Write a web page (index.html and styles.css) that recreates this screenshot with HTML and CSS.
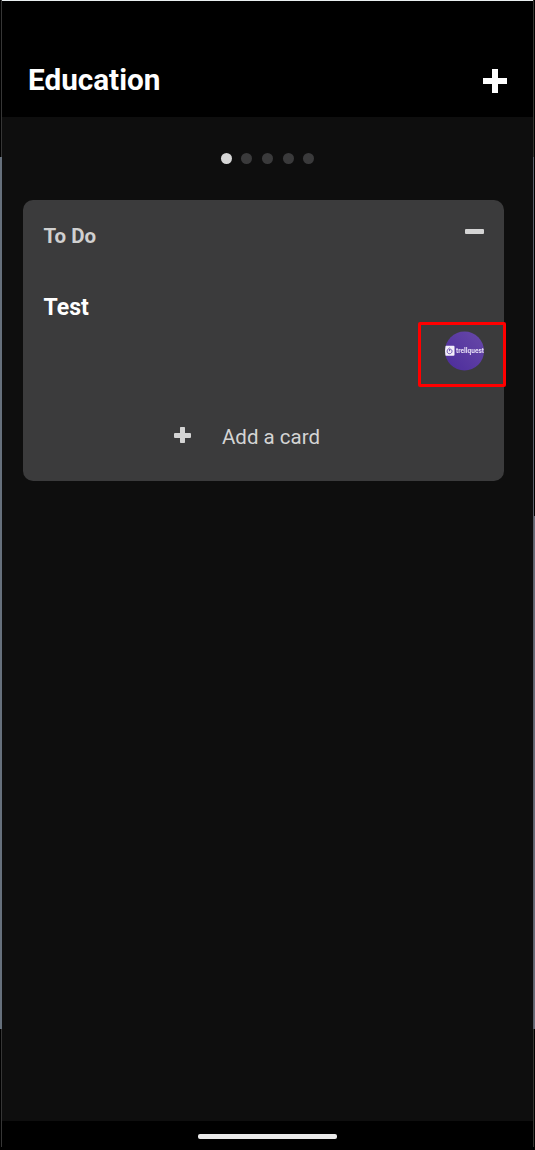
FILE: index.html
```html
<!DOCTYPE html>
<html lang="en">
<head>
<meta charset="utf-8">
<title>Education</title>
<link rel="stylesheet" href="styles.css">
</head>
<body>
<div class="device">
  <div class="edge edge-left"></div>
  <main class="screen">
    <header class="header">
      <h1 class="title">Education</h1>
      <svg class="add-icon" viewBox="0 0 24 24" shape-rendering="crispEdges"><path d="M9 0h6v9h9v6h-9v9H9v-9H0V9h9z" fill="#fff"/></svg>
    </header>
    <div class="board">
      <nav class="dots">
        <span class="dot dot-active"></span><span class="dot"></span><span class="dot"></span><span class="dot"></span><span class="dot"></span>
      </nav>
      <section class="list">
        <div class="list-head">
          <h2 class="list-title">To Do</h2>
          <span class="minus"></span>
        </div>
        <h3 class="card-title">Test</h3>
        <div class="members">
          <div class="highlight">
            <svg class="avatar" viewBox="0 0 40 40">
              <defs>
                <linearGradient id="purple" x1="0" y1="1" x2="1" y2="0"><stop offset="0" stop-color="#4b2b9b"/><stop offset="1" stop-color="#6849a8"/></linearGradient>
                <clipPath id="round"><circle cx="20.500" cy="20" r="19.500"/></clipPath>
                <filter id="soft"><feGaussianBlur stdDeviation="0.45"/></filter>
              </defs>
              <g clip-path="url(#round)">
                <rect width="40" height="40" fill="url(#purple)"/>
                <g filter="url(#soft)">
                  <rect x="0.500" y="14.800" width="10" height="10" rx="1" fill="#f3effa"/>
                  <path d="M5.600 16.800C4 18 3.200 19 3.200 20.400c0 1.500 1 2.300 2.400 2.300s2.400-1 2.400-2.400c0-1.300-.8-2.100-2.200-2.200M5.600 18v2.200" fill="none" stroke="#6a4fb0" stroke-width="1"/>
                  <text x="12" y="21.800" class="brand" textLength="28" lengthAdjust="spacingAndGlyphs">trellquest</text>
                </g>
              </g>
            </svg>
          </div>
        </div>
        <div class="add-card">
          <svg class="add-small" viewBox="0 0 17 17"><path d="M6.700 0h3.600q.7 0 .7.700V6h5q1 0 1 1v3q0 1-1 1h-5v4.300q0 .7-.7.700H6.700q-.7 0-.7-.7V11H1q-1 0-1-1V7q0-1 1-1h5V.7q0-.7.7-.7z" fill="#d4d4d4"/></svg>
          <span class="add-label">Add a card</span>
        </div>
      </section>
    </div>
    <footer class="system-bar"><span class="home-handle"></span></footer>
  </main>
  <div class="edge edge-right"></div>
</div>
</body>
</html>
```
FILE: styles.css
```css
* { box-sizing: border-box; }
body { margin: 0; background: #000; font-family: Roboto, sans-serif; }
h1, h2, h3 { margin: 0; }

.device { display: grid; grid-template-columns: 2px 531px 2px; height: 1150px; overflow: hidden; }
.edge-left {
  background:
    linear-gradient(#66707c, #66707c) 0 157px / 2px 872px no-repeat,
    linear-gradient(#363636, #363636) 1px 0 / 1px 1147px no-repeat;
}
.edge-right {
  background:
    linear-gradient(#5e626c, #5e626c) 0 157px / 1px 872px no-repeat,
    linear-gradient(#666a76, #666a76) 0 516px / 2px 513px no-repeat,
    linear-gradient(#363632, #363632) 0 0 / 1px 1147px no-repeat;
}
.screen { display: flex; flex-direction: column; border-top: 1px solid #e9eef0; border-radius: 0 0 3px 3px; overflow: hidden; }

.header { display: flex; justify-content: space-between; height: 116px; padding: 67px 26px 0 26px; background: #000; }
.title { height: 24px; font-size: 29.700px; line-height: 24px; font-weight: 700; color: #fff; white-space: nowrap; }
.add-icon { width: 24px; height: 24px; margin-top: 1px; }

.board { flex: 1; padding: 36px 29px 0 21px; background: #0e0e0e; }
.dots { display: flex; gap: 9.700px; height: 11px; margin-left: 197.600px; }
.dot { width: 11px; height: 11px; border-radius: 50%; background: #3a3a3b; }
.dot-active { background: #d6d6d6; }

.list { height: 281px; margin-top: 36px; border-radius: 10px; background: #3b3b3c; }
.list-head { display: flex; justify-content: space-between; height: 94px; padding: 26px 20px 0 20.500px; }
.list-title { font-size: 20.500px; line-height: 20px; font-weight: 700; color: #d0d0d0; }
.minus { width: 19px; height: 5px; margin-top: 3px; border-radius: 1px; background: #d4d4d4; }
.card-title { height: 28px; padding-left: 20.500px; font-size: 23px; line-height: 28px; font-weight: 700; color: #fff; }
.members { display: flex; justify-content: flex-end; height: 65px; margin-right: -2px; }
.highlight { width: 88px; height: 65px; padding: 6px 0 0 23px; border: 3px solid #f00; border-radius: 2px; }
.avatar { display: block; width: 40px; height: 40px; }
.brand { font: 700 6.500px Roboto, sans-serif; fill: #e7dff6; }
.add-card { display: flex; align-items: center; height: 24px; margin-top: 38px; padding-left: 151px; }
.add-small { width: 17px; height: 17px; margin-bottom: 3px; }
.add-label { margin-left: 31px; font-size: 20.500px; line-height: 24px; color: #d4d4d4; white-space: nowrap; }

.system-bar { display: flex; justify-content: center; height: 29px; padding-top: 13px; background: #000; }
.home-handle { width: 139px; height: 5px; border-radius: 2px; background: #ebebeb; }
```
